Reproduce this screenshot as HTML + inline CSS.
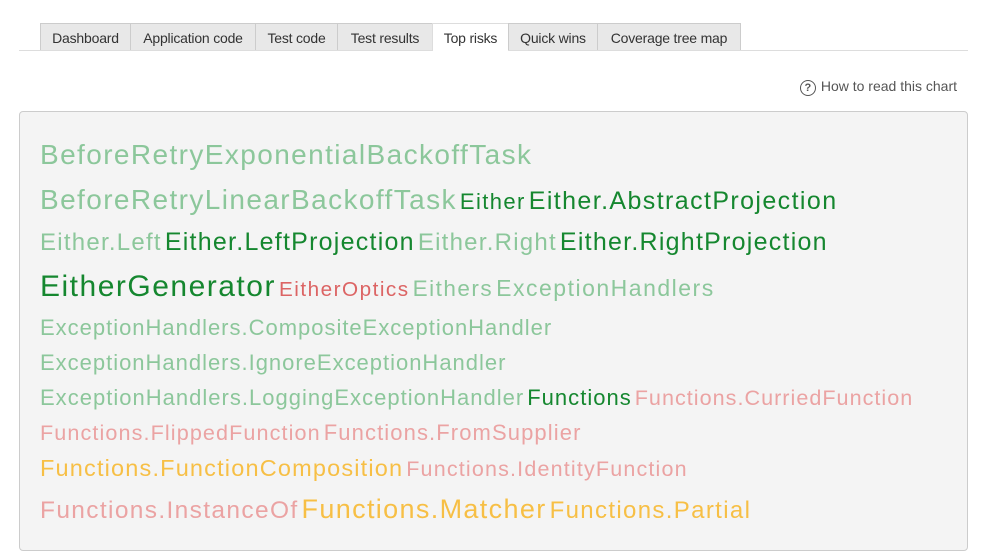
<!DOCTYPE html>
<html><head><meta charset="utf-8"><style>
body{margin:0;width:988px;height:539px;background:#fff;font-family:"Liberation Sans",Arial,sans-serif;position:relative;overflow:hidden}
.tabs{position:absolute;left:19px;top:50px;width:949px;border-top:1px solid #ddd}
.tab{position:absolute;top:23px;height:27px;background:#e8e8e8;border:1px solid #ccc;border-bottom:none;font-size:14px;color:#333;line-height:28px;text-align:center;box-sizing:border-box;letter-spacing:-0.2px}
.tab.act{background:#fff;height:28px;border-color:#ddd}
.help{position:absolute;right:31px;top:78px;font-size:14px;color:#555;line-height:16px}
.help .q{display:inline-block;width:14px;height:14px;border:1.5px solid #555;border-radius:50%;font-size:11px;line-height:14px;text-align:center;font-weight:bold;margin-right:5px;vertical-align:0px}
.panel{position:absolute;left:19px;top:111px;width:949px;height:440px;background:#f4f4f4;border:1px solid #ccc;border-radius:4px;box-sizing:border-box}
.l{position:absolute;left:40px;white-space:nowrap;line-height:1;letter-spacing:0.05em}
.l span{margin-right:3px}
.lg{color:#8cc79b}.dg{color:#15872f}.rd{color:#dc6464}.pk{color:#eba3a3}.or{color:#f7bf45}
</style></head><body>
<div class="tabs"></div>
<div class="tab" style="left:40px;width:91px">Dashboard</div>
<div class="tab" style="left:130px;width:126px">Application code</div>
<div class="tab" style="left:255px;width:83px">Test code</div>
<div class="tab" style="left:337px;width:96px">Test results</div>
<div class="tab act" style="left:432px;width:77px">Top risks</div>
<div class="tab" style="left:508px;width:90px">Quick wins</div>
<div class="tab" style="left:597px;width:144px">Coverage tree map</div>
<div class="help"><span class="q">?</span>How to read this chart</div>
<div class="panel"></div>
<div class="l" style="top:141px;font-size:28px"><span class="lg">BeforeRetryExponentialBackoffTask</span></div>
<div class="l" style="top:186px;font-size:28px"><span class="lg">BeforeRetryLinearBackoffTask</span><span class="dg" style="font-size:22px">Either</span><span class="dg" style="font-size:25px">Either.AbstractProjection</span></div>
<div class="l" style="top:230px;font-size:25px"><span class="lg" style="font-size:24px">Either.Left</span><span class="dg">Either.LeftProjection</span><span class="lg" style="font-size:24px">Either.Right</span><span class="dg">Either.RightProjection</span></div>
<div class="l" style="top:272px;font-size:30px"><span class="dg">EitherGenerator</span><span class="rd" style="font-size:20.7px">EitherOptics</span><span class="lg" style="font-size:22.5px">Eithers</span><span class="lg" style="font-size:23px">ExceptionHandlers</span></div>
<div class="l" style="top:317px;font-size:22px;letter-spacing:0.045em"><span class="lg">ExceptionHandlers.CompositeExceptionHandler</span></div>
<div class="l" style="top:352px;font-size:22px;letter-spacing:0.045em"><span class="lg">ExceptionHandlers.IgnoreExceptionHandler</span></div>
<div class="l" style="top:387px;font-size:22px;letter-spacing:0.046em"><span class="lg">ExceptionHandlers.LoggingExceptionHandler</span><span class="dg">Functions</span><span class="pk" style="font-size:21.6px">Functions.CurriedFunction</span></div>
<div class="l" style="top:422px;font-size:22px"><span class="pk" style="font-size:21.6px">Functions.FlippedFunction</span><span class="pk">Functions.FromSupplier</span></div>
<div class="l" style="top:457px;font-size:23.5px"><span class="or">Functions.FunctionComposition</span><span class="pk" style="font-size:21.5px">Functions.IdentityFunction</span></div>
<div class="l" style="top:496px;font-size:27px"><span class="pk" style="font-size:24.5px">Functions.InstanceOf</span><span class="or">Functions.Matcher</span><span class="or" style="font-size:24px">Functions.Partial</span></div>
</body></html>
